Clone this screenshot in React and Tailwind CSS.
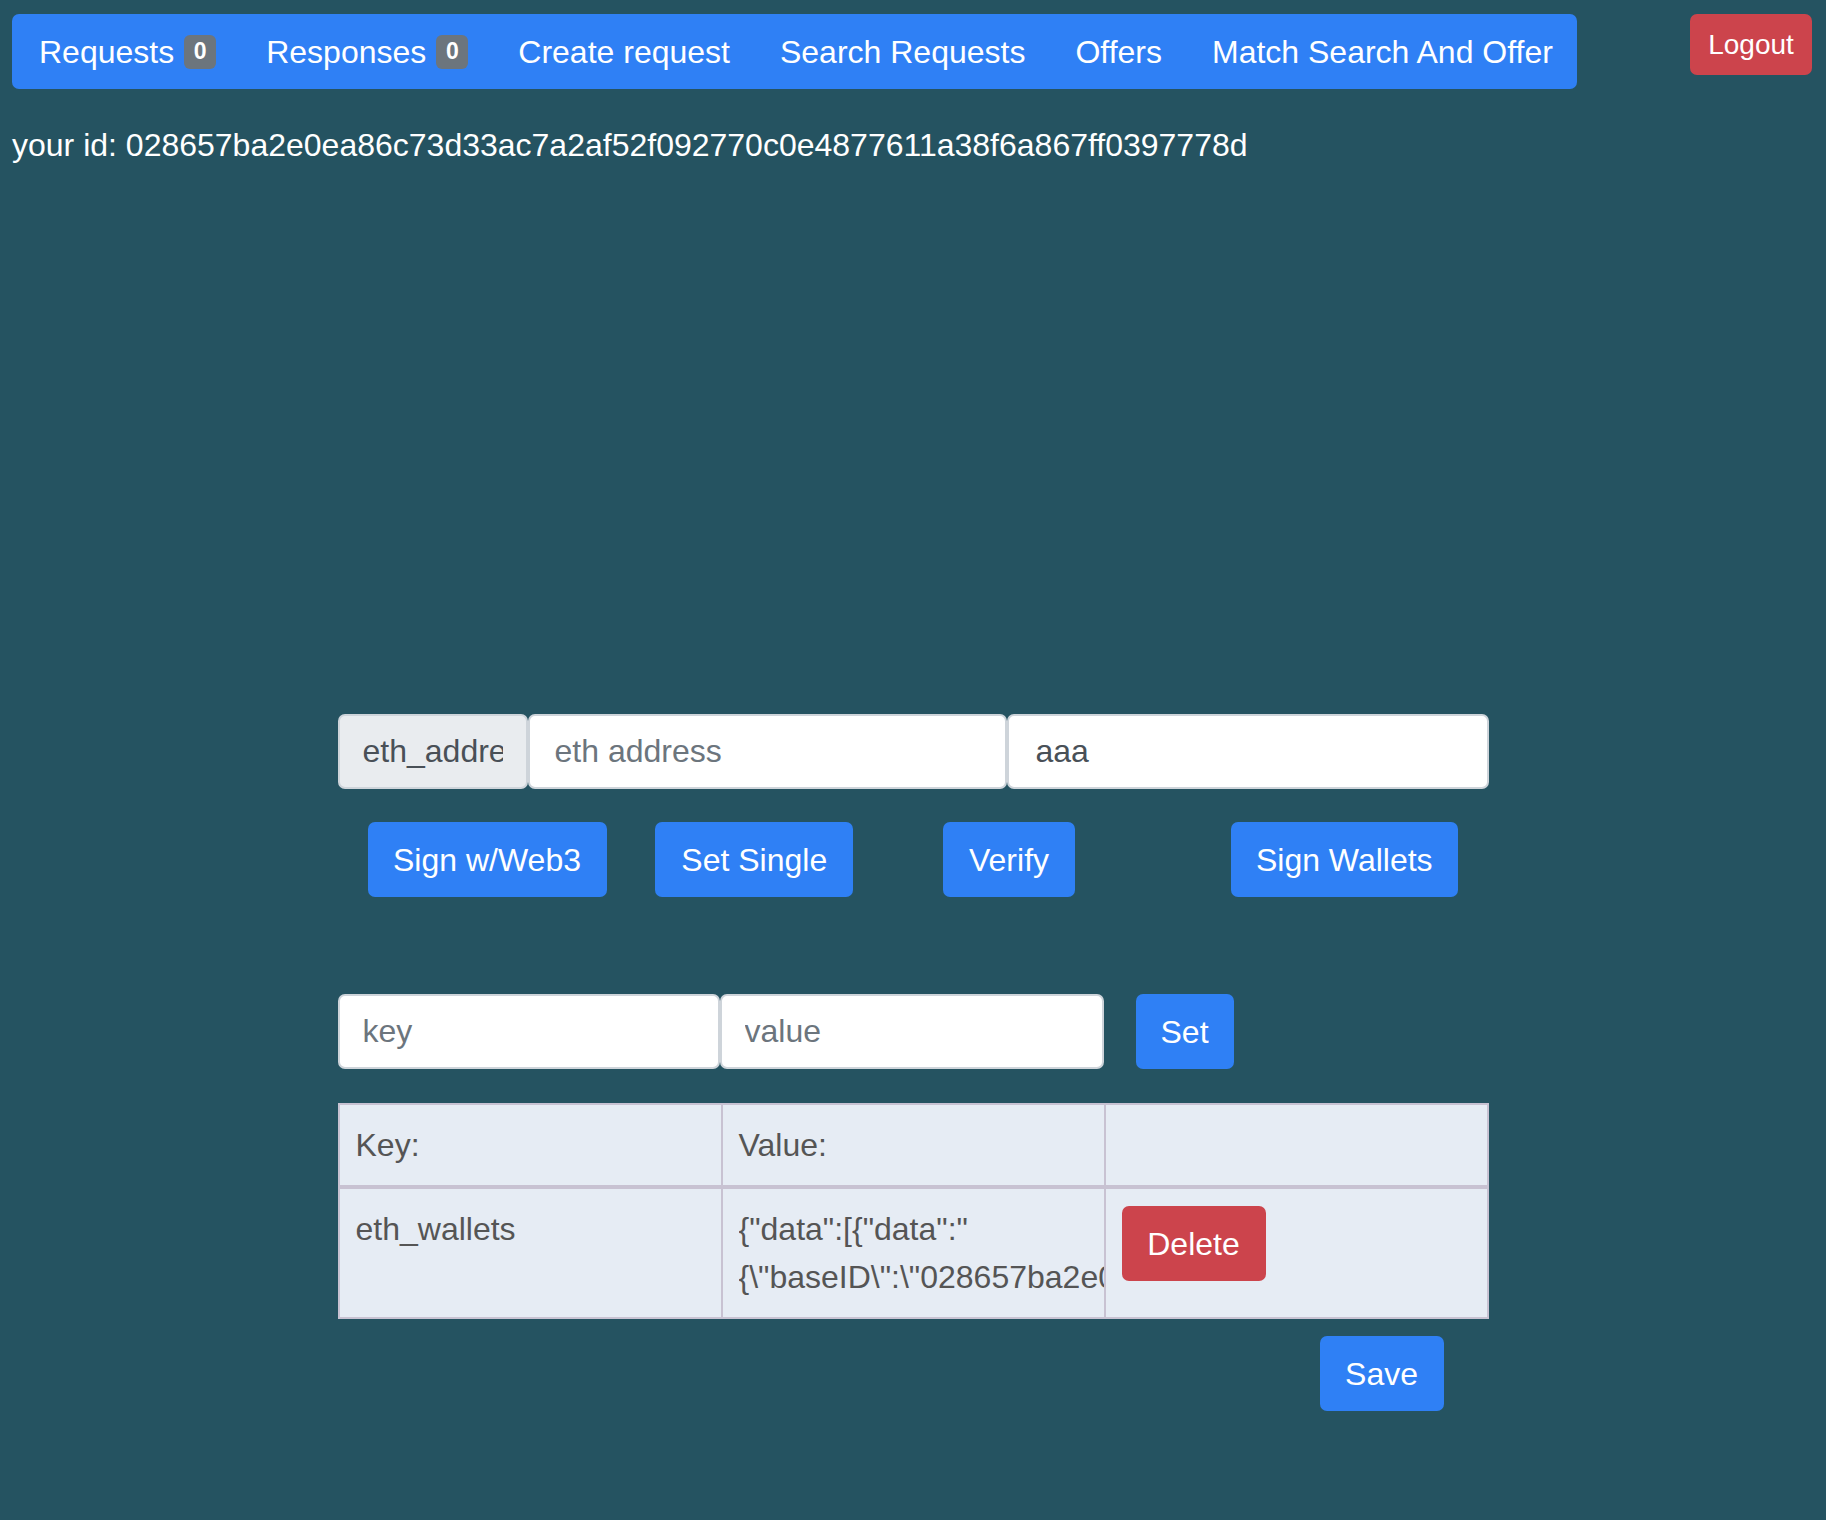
import React from 'react';

const navItems = [
  { label: 'Requests', badge: '0' },
  { label: 'Responses', badge: '0' },
  { label: 'Create request' },
  { label: 'Search Requests' },
  { label: 'Offers' },
  { label: 'Match Search And Offer' },
];

const actionButtons = [
  { label: 'Sign w/Web3', width: 'w-[239px]' },
  { label: 'Set Single', width: 'w-[198px]' },
  { label: 'Verify', width: 'w-[132px]' },
  { label: 'Sign Wallets', width: 'w-[227px]' },
];

const userId = '028657ba2e0ea86c73d33ac7a2af52f092770c0e4877611a38f6a867ff0397778d';

export default function App() {
  return (
    <div className="min-h-[1520px] bg-[#255361] font-['Liberation_Sans',Arial,sans-serif] text-[32px] leading-[48px]">
      {/* Top bar */}
      <div className="flex items-start justify-between pl-[12px] pr-[14px] pt-[14px]">
        <nav className="flex h-[75px] w-[1565px] items-center gap-[50px] rounded-[7px] bg-[#2f80f5] px-[27px] text-white">
          {navItems.map((item) => (
            <a key={item.label} className="flex items-center gap-[10px] whitespace-nowrap">
              <span>{item.label}</span>
              {item.badge && (
                <span className="flex h-[34px] w-[32px] items-center justify-center rounded-[6px] bg-[#6c757d] text-[23px] font-bold leading-none">
                  {item.badge}
                </span>
              )}
            </a>
          ))}
        </nav>
        <button className="h-[61px] w-[122px] rounded-[7px] bg-[#cc444c] text-[28px] text-white">
          Logout
        </button>
      </div>

      <div className="mt-[32px] pl-[12px] text-white">your id: {userId}</div>

      {/* Wallet form */}
      <div className="mx-auto mt-[545px] w-[1151px]">
        <div className="flex h-[75px]">
          <input
            readOnly
            value="eth_address"
            className="h-full w-[190px] rounded-[7px] border-2 border-[#ced4da] bg-[#e9ecef] px-[23px] text-[#495057] outline-none"
          />
          <input
            placeholder="eth address"
            className="h-full w-[479px] rounded-[7px] border-2 border-[#ced4da] bg-white px-[25px] text-[#495057] outline-none placeholder:text-[#6c757d]"
          />
          <input
            readOnly
            value="aaa"
            className="h-full flex-1 rounded-[7px] border-2 border-[#ced4da] bg-white px-[27px] text-[#495057] outline-none"
          />
        </div>

        <div className="mt-[33px] grid grid-cols-4">
          {actionButtons.map((b) => (
            <div key={b.label} className="pl-[30px]">
              <button className={`h-[75px] ${b.width} rounded-[7px] bg-[#2f80f5] text-white`}>{b.label}</button>
            </div>
          ))}
        </div>

        <div className="mt-[97px] flex h-[75px]">
          <input
            placeholder="key"
            className="h-full w-[382px] rounded-[7px] border-2 border-[#ced4da] bg-white px-[23px] outline-none placeholder:text-[#6c757d]"
          />
          <input
            placeholder="value"
            className="h-full w-[384px] rounded-[7px] border-2 border-[#ced4da] bg-white px-[23px] outline-none placeholder:text-[#6c757d]"
          />
          <button className="ml-[32px] h-full w-[98px] rounded-[7px] bg-[#2f80f5] text-white">Set</button>
        </div>

        {/* Stored values */}
        <table className="mt-[34px] w-full table-fixed border-collapse bg-[#e6ecf4] text-[#555555]">
          <thead>
            <tr className="border-b-4 border-[#c8c2d2]">
              <td className="border-2 border-[#c8c2d2] px-[16px] py-[16px] align-top">Key:</td>
              <td className="border-2 border-[#c8c2d2] px-[16px] py-[16px] align-top">Value:</td>
              <td className="border-2 border-[#c8c2d2] px-[16px] py-[16px]"></td>
            </tr>
          </thead>
          <tbody>
            <tr>
              <td className="border-2 border-[#c8c2d2] px-[16px] py-[16px] align-top">eth_wallets</td>
              <td className="border-2 border-[#c8c2d2] px-[16px] py-[16px] align-top">
                <div className="-mr-[16px] overflow-hidden whitespace-nowrap">
                  {'{"data":[{"data":"'}
                  <br />
                  {'{\\"baseID\\":\\"' + userId + '\\",\\"address\\":\\"aaa\\"}"}]}'}
                </div>
              </td>
              <td className="border-2 border-[#c8c2d2] px-[16px] py-[16px] align-top">
                <button className="mt-[1px] h-[75px] w-[144px] rounded-[7px] bg-[#cc444c] text-white">Delete</button>
              </td>
            </tr>
          </tbody>
        </table>

        <div className="mt-[17px] flex justify-end pr-[45px]">
          <button className="h-[75px] w-[124px] rounded-[7px] bg-[#2f80f5] text-white">Save</button>
        </div>
      </div>
    </div>
  );
}
